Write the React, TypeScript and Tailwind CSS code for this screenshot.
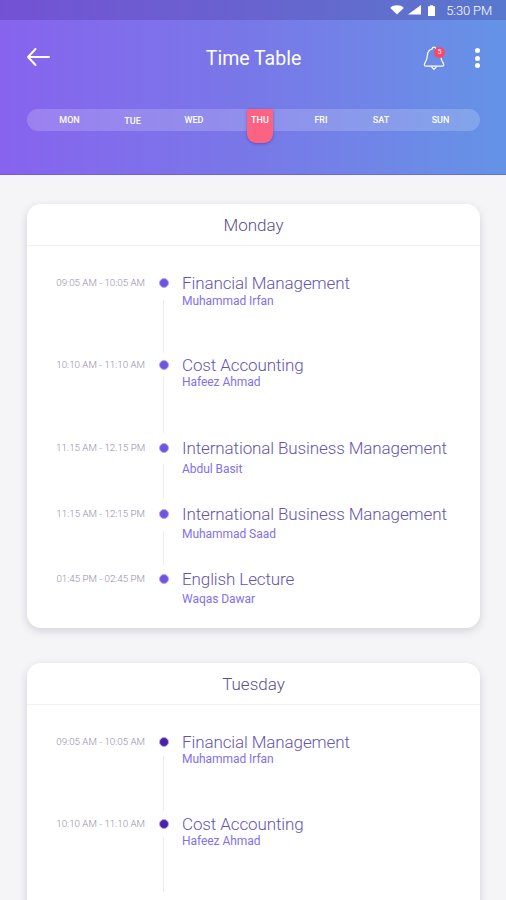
import { clsx } from "clsx"

type Lecture = {
  time: string
  title: string
  teacher: string
  row: string
  gap: string
  line?: string
}

const days = [
  { label: "MON", width: "w-[63px]" },
  { label: "TUE", width: "w-[63px]", className: "mt-px" },
  { label: "WED", width: "w-[60px]" },
  { label: "THU", width: "w-[26px]", active: true },
  { label: "FRI", width: "w-[60px]" },
  { label: "SAT", width: "w-[60px]" },
  { label: "SUN", width: "w-[59px]" },
]

const monday: Lecture[] = [
  { time: "09:05 AM - 10:05 AM", title: "Financial Management", teacher: "Muhammad Irfan", row: "h-[82px]", gap: "mt-px", line: "mt-3 h-[53px]" },
  { time: "10:10 AM - 11:10 AM", title: "Cost Accounting", teacher: "Hafeez Ahmad", row: "h-[83px]", gap: "mt-0", line: "mt-1.5 h-[57px]" },
  { time: "11.15 AM - 12.15 PM", title: "International Business Management", teacher: "Abdul Basit", row: "h-[66px]", gap: "mt-1", line: "mt-[11px] h-[35px]" },
  { time: "11:15 AM - 12:15 PM", title: "International Business Management", teacher: "Muhammad Saad", row: "h-[65px]", gap: "mt-[3px]", line: "mt-3 h-[34px]" },
  { time: "01:45 PM - 02:45 PM", title: "English Lecture", teacher: "Waqas Dawar", row: "h-[59px]", gap: "mt-[3px]" },
]

const tuesday: Lecture[] = [
  { time: "09:05 AM - 10:05 AM", title: "Financial Management", teacher: "Muhammad Irfan", row: "h-[82px]", gap: "mt-0", line: "mt-[9px] h-[55px]" },
  { time: "10:10 AM - 11:10 AM", title: "Cost Accounting", teacher: "Hafeez Ahmad", row: "h-[82px]", gap: "mt-0", line: "mt-2 h-[55px]" },
  { time: "11.15 AM - 12.15 PM", title: "International Business Management", teacher: "Abdul Basit", row: "h-[66px]", gap: "mt-[3px]" },
]

function StatusBar() {
  return (
    <div className="flex h-5 items-center justify-end bg-[#2a1070]/20 pr-3.5 text-white">
      <svg className="h-[10px] w-[14px]" viewBox="0 0 14 11" preserveAspectRatio="none" fill="currentColor">
        <path d="M7 10.5 0.3 3.2C2 1.1 4.4 0.4 7 0.4s5 .7 6.7 2.8z" />
      </svg>
      <svg className="ml-1 h-[10px] w-[13px]" viewBox="0 0 13 11" preserveAspectRatio="none" fill="currentColor">
        <path d="M13 0v10.5H0z" />
      </svg>
      <svg className="ml-[7px] h-[11px] w-[7px]" viewBox="0 0 7 11" fill="currentColor">
        <path d="M2 0.3h3v1h2V11H0V1.3h2z" />
      </svg>
      <span className="ml-[11px] pt-px text-[13px] leading-5 font-light tracking-[-0.15px]">5:30 PM</span>
    </div>
  )
}

function Header() {
  return (
    <header className="h-[175px] border-b border-[#6a55d8]/60 bg-linear-to-r from-[#8763ee] via-[#7878e8] to-[#6493e6] bg-origin-border">
      <StatusBar />

      {/* Toolbar */}
      <div className="flex h-[76px] items-center pr-[26px] pl-[26px] text-white">
        <svg className="mb-0.5 h-5 w-[25px]" viewBox="0 0 25 20" fill="none" stroke="currentColor" strokeWidth="2" strokeLinecap="round" strokeLinejoin="round">
          <path d="M9.5 2 2 10l7.5 8M2 10h21" />
        </svg>
        <h1 className="flex-1 pt-px pl-[33px] text-center text-[19.5px] leading-none">Time Table</h1>
        <div className="relative mr-[30px] h-[26px] w-[22px]">
          <svg className="h-[26px] w-[22px]" viewBox="0 0 22 26" fill="none" stroke="currentColor" strokeWidth="1.2" strokeLinejoin="round">
            <path d="M11 2.2c-1.2 0-1.8.7-1.8 1.7-3 .8-4.6 3.2-4.8 6.4-.2 3.4-.6 4.6-1.9 6.5-.8 1.1-1.2 1.8-1.2 2.9 0 1 .7 1.5 1.6 1.5h16.2c.9 0 1.6-.5 1.6-1.5 0-1.1-.4-1.8-1.2-2.9-1.3-1.9-1.7-3.1-1.9-6.5-.2-3.2-1.8-5.6-4.8-6.4 0-1-.6-1.7-1.8-1.7z" />
            <path d="M8.2 21.3 11 24.3l2.8-3" />
          </svg>
          <span className="absolute top-0.5 right-0 flex h-[11px] w-[11px] items-center justify-center rounded-full bg-[#fb4668] text-[7px] leading-none">
            5
          </span>
        </div>
        <div className="flex w-[5px] flex-col gap-[2.5px]">
          <span className="h-[5px] w-[5px] rounded-full bg-white" />
          <span className="h-[5px] w-[5px] rounded-full bg-white" />
          <span className="h-[5px] w-[5px] rounded-full bg-white" />
        </div>
      </div>

      {/* Week days */}
      <nav className="mt-[13px] mr-[26px] ml-[27px] flex h-[22px] items-start rounded-full bg-white/18 pl-[11px] text-[9px] leading-[23px] font-medium text-white">
        {days.map((day) =>
          day.active ? (
            <span
              key={day.label}
              className="mr-[18px] ml-[23px] h-[34px] w-[26px] rounded-b-[9px] bg-[#fc6383] text-center shadow-[0_1px_3px_rgba(60,30,140,0.45)]"
            >
              {day.label}
            </span>
          ) : (
            <span key={day.label} className={clsx("text-center", day.width, day.className)}>
              {day.label}
            </span>
          )
        )}
      </nav>
    </header>
  )
}

function LectureRow({ lecture, dot }: { lecture: Lecture; dot: string }) {
  return (
    <li className={clsx("flex items-start", lecture.row)}>
      <span className="w-[89px] text-right text-[9.75px] leading-5 font-light whitespace-nowrap text-[#918ea8]">
        {lecture.time}
      </span>
      <div className="ml-3.5 flex w-2.5 flex-col items-center pt-[5px]">
        <span className={clsx("h-2.5 w-2.5 rounded-full border", dot)} />
        {lecture.line && <span className={clsx("mr-px w-px bg-[#ededf3]", lecture.line)} />}
      </div>
      <div className="ml-[13px] whitespace-nowrap">
        <p className="text-[17px] leading-5 font-light tracking-[-0.11px] text-[#6455b0]">{lecture.title}</p>
        <p className={clsx("text-[12px] leading-[15px] tracking-[-0.05px] text-[#8370ea]", lecture.gap)}>{lecture.teacher}</p>
      </div>
    </li>
  )
}

function DayCard({ name, lectures, dot }: { name: string; lectures: Lecture[]; dot: string }) {
  return (
    <section className="rounded-[14px] bg-white shadow-[0_3px_9px_rgba(40,40,60,0.17)]">
      <h2 className="h-[42px] border-b border-[#f1f1f4] text-center text-[17px] leading-[42px] font-light text-[#5a518a]">
        {name}
      </h2>
      <ul className="pt-[27px] pl-[29px]">
        {lectures.map((lecture, i) => (
          <LectureRow key={i} lecture={lecture} dot={dot} />
        ))}
      </ul>
    </section>
  )
}

export default function App() {
  return (
    <div className="h-[900px] w-[506px] overflow-hidden bg-[#f5f5f8] font-['Roboto',sans-serif]">
      <Header />
      <main className="flex flex-col gap-[35px] pt-[29px] pr-[26px] pl-[27px]">
        <DayCard name="Monday" lectures={monday} dot="border-[#b4a6fa] bg-[#6f54e0]" />
        <DayCard name="Tuesday" lectures={tuesday} dot="border-[#b3a4ec] bg-[#4a22a8]" />
      </main>
    </div>
  )
}
